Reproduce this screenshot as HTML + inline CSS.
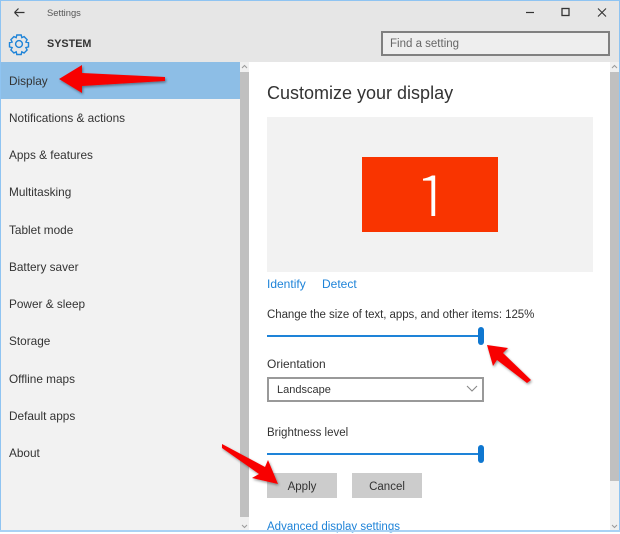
<!DOCTYPE html>
<html><head><meta charset="utf-8">
<style>
html,body{margin:0;padding:0}
body{width:620px;height:532px;position:relative;overflow:hidden;background:#fff;font-family:"Liberation Sans",sans-serif;color:#333}
div{position:absolute;box-sizing:border-box}
.t{white-space:nowrap;font-size:11.5px;line-height:14px;color:#333}
.n{left:9px;font-size:11.8px}
.sl{background:#0f77d0;width:6px;border-radius:3px;height:18px}
.btn{background:#ccc;top:473px;height:25px;font-size:11.5px;line-height:29px;text-align:center;color:#333}
</style></head><body>
<div style="left:0;top:0;width:620px;height:62px;background:#e6e6e6"></div>
<div style="left:0;top:62px;width:240px;height:470px;background:#f2f2f2"></div>
<div style="left:1px;top:62px;width:239px;height:37px;background:#8dbee6"></div>

<div style="left:240px;top:62px;width:9px;height:470px;background:#f0f0f0"></div>
<div style="left:240px;top:72px;width:9px;height:445px;background:#c0c0c0"></div>
<div style="left:610px;top:62px;width:9px;height:470px;background:#f0f0f0"></div>
<div style="left:610px;top:72px;width:9px;height:409px;background:#c0c0c0"></div>

<svg style="position:absolute;left:0;top:0" width="620" height="532">
<path d="M14.500 12.500h10M14.500 12.500l4-4M14.500 12.500l4 4" fill="none" stroke="#333" stroke-width="1.200"/>
<g fill="none" stroke="#1f84d8" stroke-width="1.400">
<circle cx="19" cy="44" r="3.400"/>
<path d="M16.800 35h4.400l.6 2.600 2.300-1 3 3-1.200 2.400 2.600.7v4.200l-2.600.7 1.200 2.400-3 3-2.300-1.200-.6 2.700h-4.400l-.6-2.700-2.300 1.200-3-3 1.200-2.400-2.600-.7v-4.200l2.600-.7-1.200-2.400 3-3 2.300 1z"/>
</g>
<path d="M526 12.500h8" stroke="#333" stroke-width="1.200"/>
<rect x="562" y="8.500" width="7" height="7" fill="none" stroke="#333" stroke-width="1.300"/>
<path d="M598 8.500l8 8M606 8.500l-8 8" stroke="#333" stroke-width="1.100"/>
<circle cx="601.500" cy="41.500" r="3.200" fill="none" stroke="#8a8a8a" stroke-width="1"/>
<path d="M599 44l-3 3.500" fill="none" stroke="#8a8a8a" stroke-width="1.100"/>
<path d="M242 68l2.500-2.500 2.500 2.500M242 525l2.500 2.500 2.500-2.500M612 68l2.500-2.500 2.500 2.500M612 525l2.500 2.500 2.500-2.500" fill="none" stroke="#9a9a9a" stroke-width="1"/>
</svg>

<div class="t" style="left:47px;top:6px;font-size:9.400px;color:#555">Settings</div>
<div class="t" style="left:47px;top:37px;font-size:10.800px;font-weight:bold;color:#333">SYSTEM</div>

<div style="left:381px;top:31px;width:229px;height:25px;background:#eee;border:2px solid #808080"></div>
<div class="t" style="left:390px;top:37px;color:#666">Find a setting</div>

<div class="t n" style="top:74px">Display</div>
<div class="t n" style="top:111px">Notifications &amp; actions</div>
<div class="t n" style="top:148px">Apps &amp; features</div>
<div class="t n" style="top:185px">Multitasking</div>
<div class="t n" style="top:223px">Tablet mode</div>
<div class="t n" style="top:260px">Battery saver</div>
<div class="t n" style="top:297px">Power &amp; sleep</div>
<div class="t n" style="top:334px">Storage</div>
<div class="t n" style="top:372px">Offline maps</div>
<div class="t n" style="top:409px">Default apps</div>
<div class="t n" style="top:446px">About</div>

<div class="t" style="left:267px;top:82px;font-size:18px;line-height:23px;color:#333">Customize your display</div>
<div style="left:267px;top:117px;width:326px;height:155px;background:#f2f2f2"></div>
<div style="left:362px;top:157px;width:136px;height:75px;background:#f93400"></div>
<div style="left:362px;top:157px;width:136px;height:59px;overflow:hidden">
<div style="left:2px;top:-1px;width:136px;height:75px;color:#fff;font-family:'Noto Sans CJK JP',sans-serif;font-size:64px;line-height:75px;text-align:center;-webkit-text-stroke:2px #f93400">1</div>
</div>
<div class="t" style="left:267px;top:277px;color:#1e83d8;font-size:12px">Identify</div>
<div class="t" style="left:322px;top:277px;color:#1e83d8;font-size:12px">Detect</div>

<div class="t" style="left:267px;top:308px;letter-spacing:-.06px">Change the size of text, apps, and other items: 125%</div>
<div style="left:267px;top:335px;width:215px;height:2px;background:#1e83d8"></div>
<div class="sl" style="left:478px;top:327px"></div>

<div class="t" style="left:267px;top:357px;font-size:12px">Orientation</div>
<div style="left:267px;top:377px;width:217px;height:25px;border:2px solid #999;background:#fff"></div>
<div class="t" style="left:277px;top:383px;font-size:11px">Landscape</div>
<svg style="position:absolute;left:466px;top:385px" width="12" height="8"><path d="M1 1l5 5 5-5" fill="none" stroke="#888" stroke-width="1.100"/></svg>

<div class="t" style="left:267px;top:426px">Brightness level</div>
<div style="left:267px;top:453px;width:215px;height:2px;background:#1e83d8"></div>
<div class="sl" style="left:478px;top:445px"></div>

<div class="btn" style="left:267px;width:70px">Apply</div>
<div class="btn" style="left:352px;width:70px">Cancel</div>
<div class="t" style="left:267px;top:520px;color:#1e83d8">Advanced display settings</div>

<div style="left:0;top:0;width:620px;height:1px;background:#8fc4f2"></div>
<div style="left:0;top:0;width:1px;height:532px;background:#8fc4f2"></div>
<div style="left:619px;top:0;width:1px;height:532px;background:#8fc4f2"></div>
<div style="left:0;top:530px;width:620px;height:2px;background:#a9d2f5"></div>

<svg style="position:absolute;left:0;top:0" width="620" height="532">
<defs><filter id="s" x="-20%" y="-20%" width="150%" height="150%"><feDropShadow dx="1" dy="1.500" stdDeviation="1.200" flood-color="#000" flood-opacity=".4"/></filter></defs>
<g fill="#f80000" filter="url(#s)">
<path d="M59 79L82 65 82 73 165 77 165 81 82 86 82 93z"/>
<path d="M487 345L508 348 503 353 531 380 527 383 497 360 493 366z"/>
<path d="M222 444L265 467 268 460 278 484 252 478 259 474 222 448z"/>
</g>
</svg>
</body></html>
